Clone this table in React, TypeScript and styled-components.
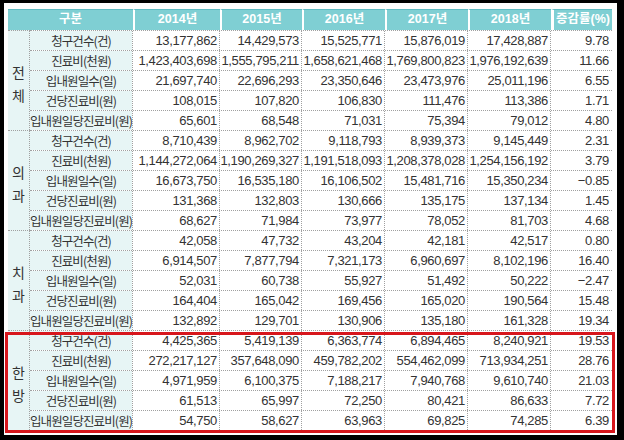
import styled, { createGlobalStyle } from 'styled-components';

const GlobalStyle = createGlobalStyle`
  html, body {
    margin: 0;
    padding: 0;
    background: #fff;
  }
`;

const Frame = styled.div`
  box-sizing: border-box;
  width: 624px;
  height: 440px;
  border-style: solid;
  border-color: #000;
  border-width: 3px 7px 5px 4px;
  padding: 6px 5px 0 4px;
  background: #fff;
  font-family: "Liberation Sans", "Noto Sans CJK KR", sans-serif;
  color: #333;
`;

const Table = styled.div`
  width: 604px;
  display: flex;
  flex-direction: column;
`;

const HeaderRow = styled.div`
  display: grid;
  grid-template-columns: 125px 87px 82px 83px 83px 83px 61px;
  height: 21px;
`;

const HeaderCell = styled.div<{ $gap?: number }>`
  box-sizing: border-box;
  background: #7fcfd3;
  border-top: 1px solid #5fbcc3;
  border-left: ${(p) => p.$gap ?? 0}px solid #fff;
  color: #fff;
  font-size: 12.5px;
  font-weight: 700;
  line-height: 19px;
  text-align: center;
`;

const Section = styled.div<{ $marked?: boolean }>`
  position: relative;
  display: flex;

  ${(p) =>
    p.$marked &&
    `
    &::after {
      content: '';
      position: absolute;
      top: 2px;
      left: -3px;
      right: -3px;
      bottom: -3px;
      border: 3px solid #d7161c;
      pointer-events: none;
    }
  `}
`;

const GroupCell = styled.div`
  box-sizing: border-box;
  width: 22px;
  flex: none;
  display: flex;
  flex-direction: column;
  align-items: center;
  justify-content: center;
  padding-top: 6px;
  background: #e7f5f5;
  border-top: 1px dotted #a0a0a0;
  border-right: 1px dotted #a0a0a0;
  font-family: "Noto Sans CJK KR", sans-serif;
  font-size: 14px;
  line-height: 23px;
  color: #333;
`;

const Rows = styled.div`
  flex: 1;
  display: flex;
  flex-direction: column;
`;

const Row = styled.div`
  box-sizing: border-box;
  display: grid;
  grid-template-columns: 102px 87px 82px 83px 83px 83px 61px;
  height: 20px;
  border-top: 1px dotted #a0a0a0;
`;

const Label = styled.div`
  background: #e7f5f5;
  font-family: "Noto Sans CJK KR", sans-serif;
  font-size: 12.5px;
  letter-spacing: -0.9px;
  line-height: 19px;
  text-align: center;
  white-space: nowrap;
`;

const Value = styled.div`
  box-sizing: border-box;
  border-left: 1px dotted #a0a0a0;
  padding-right: 2px;
  font-size: 13px;
  letter-spacing: -0.35px;
  line-height: 19px;
  text-align: right;
  white-space: nowrap;
`;

const labels = ['청구건수(건)', '진료비(천원)', '입내원일수(일)', '건당진료비(원)', '입내원일당진료비(원)'];

const years = ['2014년', '2015년', '2016년', '2017년', '2018년'];

const groups: { name: string; marked?: boolean; rows: string[][] }[] = [
  {
    name: '전체',
    rows: [
      ['13,177,862', '14,429,573', '15,525,771', '15,876,019', '17,428,887', '9.78'],
      ['1,423,403,698', '1,555,795,211', '1,658,621,468', '1,769,800,823', '1,976,192,639', '11.66'],
      ['21,697,740', '22,696,293', '23,350,646', '23,473,976', '25,011,196', '6.55'],
      ['108,015', '107,820', '106,830', '111,476', '113,386', '1.71'],
      ['65,601', '68,548', '71,031', '75,394', '79,012', '4.80'],
    ],
  },
  {
    name: '의과',
    rows: [
      ['8,710,439', '8,962,702', '9,118,793', '8,939,373', '9,145,449', '2.31'],
      ['1,144,272,064', '1,190,269,327', '1,191,518,093', '1,208,378,028', '1,254,156,192', '3.79'],
      ['16,673,750', '16,535,180', '16,106,502', '15,481,716', '15,350,234', '−0.85'],
      ['131,368', '132,803', '130,666', '135,175', '137,134', '1.45'],
      ['68,627', '71,984', '73,977', '78,052', '81,703', '4.68'],
    ],
  },
  {
    name: '치과',
    rows: [
      ['42,058', '47,732', '43,204', '42,181', '42,517', '0.80'],
      ['6,914,507', '7,877,794', '7,321,173', '6,960,697', '8,102,196', '16.40'],
      ['52,031', '60,738', '55,927', '51,492', '50,222', '−2.47'],
      ['164,404', '165,042', '169,456', '165,020', '190,564', '15.48'],
      ['132,892', '129,701', '130,906', '135,180', '161,328', '19.34'],
    ],
  },
  {
    name: '한방',
    marked: true,
    rows: [
      ['4,425,365', '5,419,139', '6,363,774', '6,894,465', '8,240,921', '19.53'],
      ['272,217,127', '357,648,090', '459,782,202', '554,462,099', '713,934,251', '28.76'],
      ['4,971,959', '6,100,375', '7,188,217', '7,940,768', '9,610,740', '21.03'],
      ['61,513', '65,997', '72,250', '80,421', '86,633', '7.72'],
      ['54,750', '58,627', '63,963', '69,825', '74,285', '6.39'],
    ],
  },
];

export default function App() {
  return (
    <>
      <GlobalStyle />
      <Frame>
        <Table>
          <HeaderRow>
            <HeaderCell>구분</HeaderCell>
            {years.map((y) => (
              <HeaderCell key={y} $gap={2}>{y}</HeaderCell>
            ))}
            <HeaderCell $gap={3}>증감률(%)</HeaderCell>
          </HeaderRow>
          {groups.map((g) => (
            <Section key={g.name} $marked={g.marked}>
              <GroupCell>
                {g.name.split('').map((ch) => (
                  <span key={ch}>{ch}</span>
                ))}
              </GroupCell>
              <Rows>
                {g.rows.map((vals, i) => (
                  <Row key={labels[i]}>
                    <Label>{labels[i]}</Label>
                    {vals.map((v, j) => (
                      <Value key={j}>{v}</Value>
                    ))}
                  </Row>
                ))}
              </Rows>
            </Section>
          ))}
        </Table>
      </Frame>
    </>
  );
}
